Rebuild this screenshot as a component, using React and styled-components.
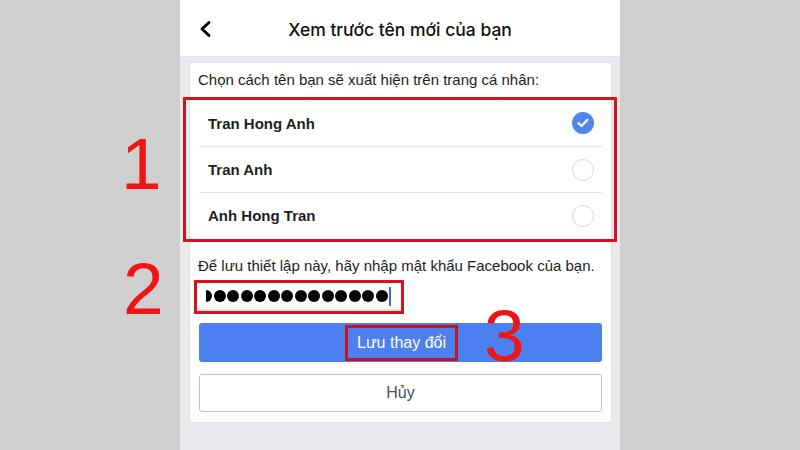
import React from "react";
import styled, { createGlobalStyle } from "styled-components";

const GlobalStyle = createGlobalStyle`
  html, body {
    margin: 0;
    padding: 0;
    background: #cfcfcf;
  }
  * {
    box-sizing: border-box;
  }
`;

const names = [
  { label: "Tran Hong Anh", checked: true },
  { label: "Tran Anh", checked: false },
  { label: "Anh Hong Tran", checked: false }
];

const Page = styled.div`
  position: relative;
  width: 800px;
  height: 450px;
  overflow: hidden;
  display: flex;
  justify-content: center;
  background: #cfcfcf;
  font-family: "Liberation Sans", Arial, sans-serif;
`;

const Phone = styled.div`
  width: 440px;
  height: 450px;
  background: #e9eaed;
  display: flex;
  flex-direction: column;
`;

const Header = styled.header`
  height: 57px;
  flex-shrink: 0;
  background: #fff;
  display: grid;
  grid-template-columns: 48px 1fr 48px;
  align-items: center;
  border-bottom: 1px solid #e4e5e8;
`;

const BackButton = styled.div`
  display: flex;
  align-items: center;
  justify-content: center;
  padding-left: 2px;
  padding-top: 2px;
`;

const Title = styled.h1`
  margin: 0;
  text-align: center;
  font-family: Inter, "Liberation Sans", sans-serif;
  font-size: 17.5px;
  font-weight: 500;
  color: #111;
  padding-top: 3px;
`;

const Card = styled.section`
  margin: 5px 8px 0 9px;
  background: #fff;
  border: 1px solid #dfe0e4;
  border-radius: 0 0 3px 3px;
  padding: 7px 0 10px;
  display: flex;
  flex-direction: column;
`;

const Prompt = styled.p`
  margin: 0;
  padding: 0 8px;
  font-size: 15px;
  line-height: 20px;
  color: #1d1e21;
`;

const Annotated = styled.div`
  position: relative;
  margin-top: ${p => p.$mt || 0}px;
`;

const RedBox = styled.span`
  position: absolute;
  top: ${p => p.$t}px;
  right: ${p => p.$r}px;
  bottom: ${p => p.$b}px;
  left: ${p => p.$l}px;
  border: 3px solid #d3141c;
  pointer-events: none;
`;

const OptionList = styled.ul`
  list-style: none;
  margin: 0 9px;
  padding: 0;
`;

const Option = styled.li`
  height: 46px;
  display: flex;
  align-items: center;
  justify-content: space-between;
  padding: 0 8px 0 9px;
  border-top: ${p => (p.$first ? "none" : "1px solid #e3e4e7")};
  font-size: 15px;
  font-weight: 700;
  color: #1d1e21;
`;

const Radio = styled.span`
  width: 22px;
  height: 22px;
  border-radius: 50%;
  display: flex;
  align-items: center;
  justify-content: center;
  background: ${p => (p.$checked ? "#4f86e8" : "#fff")};
  border: ${p => (p.$checked ? "none" : "1px solid #d8dade")};
`;

const Hint = styled.p`
  margin: 18px 0 0;
  padding: 0 8px;
  font-size: 15px;
  line-height: 20px;
  color: #1d1e21;
  white-space: nowrap;
`;

const PasswordWrap = styled(Annotated)`
  margin-left: 8px;
  width: 203px;
`;

const PasswordField = styled.div`
  height: 28px;
  background: #fff;
  border-bottom: 2px solid #dbe4f3;
  display: flex;
  align-items: center;
  padding-left: 8px;
`;

const DotTrack = styled.div`
  display: flex;
  align-items: center;
  overflow: hidden;
`;

const Dot = styled.span`
  flex-shrink: 0;
  width: 12px;
  height: 12px;
  border-radius: 50%;
  background: #000;
  margin-right: 1.5px;
  &:first-child {
    margin-left: -6px;
  }
`;

const Caret = styled.span`
  flex-shrink: 0;
  width: 2px;
  height: 19px;
  background: #3b6fd8;
`;

const PrimaryButton = styled.div`
  margin: 12px 9px 0;
  height: 39px;
  background: #4c80f1;
  border-radius: 3px;
  display: flex;
  align-items: center;
  justify-content: center;
`;

const PrimaryLabel = styled.span`
  display: inline-block;
  border: 3px solid #c8141c;
  padding: 0 9px;
  line-height: 30px;
  font-size: 16px;
  color: #fff;
  margin-left: 2px;
`;

const CancelButton = styled.div`
  margin: 12px 9px 0;
  height: 38px;
  background: #fff;
  border: 1px solid #bfc3c9;
  border-radius: 3px;
  display: flex;
  align-items: center;
  justify-content: center;
  font-size: 16px;
  color: #4b4f56;
`;

const Marker = styled.span`
  position: absolute;
  top: ${p => p.$top}px;
  left: ${p => p.$left}px;
  font-family: "Liberation Sans", Arial, sans-serif;
  font-size: 73px;
  line-height: 73px;
  color: #ef1515;
  pointer-events: none;
`;

const Chevron = () => (
  <svg width="14" height="18" viewBox="0 0 14 18">
    <polyline
      points="11,2.5 4,9 11,15.5"
      fill="none"
      stroke="#000"
      strokeWidth="3"
      strokeLinecap="round"
      strokeLinejoin="round"
    />
  </svg>
);

const Tick = () => (
  <svg width="12" height="10" viewBox="0 0 12 10">
    <polyline
      points="1.5,5.2 4.6,8 10.5,1.8"
      fill="none"
      stroke="#fff"
      strokeWidth="2.2"
      strokeLinecap="round"
      strokeLinejoin="round"
    />
  </svg>
);

const App = () => {
  const dots = Array.from({ length: 14 }, (_, i) => i);

  return (
    <>
      <GlobalStyle />
      <Page>
        <Phone>
          <Header>
            <BackButton>
              <Chevron />
            </BackButton>
            <Title>Xem trước tên mới của bạn</Title>
            <span />
          </Header>

          <Card>
            <Prompt>Chọn cách tên bạn sẽ xuất hiện trên trang cá nhân:</Prompt>

            <Annotated $mt={10}>
              <OptionList>
                {names.map((name, i) => (
                  <Option key={name.label} $first={i === 0}>
                    {name.label}
                    <Radio $checked={name.checked}>
                      {name.checked && <Tick />}
                    </Radio>
                  </Option>
                ))}
              </OptionList>
              <RedBox $t={-3} $r={-6} $b={-4} $l={-7} />
            </Annotated>

            <Hint>Để lưu thiết lập này, hãy nhập mật khẩu Facebook của bạn.</Hint>

            <PasswordWrap $mt={7}>
              <PasswordField>
                <DotTrack>
                  {dots.map(d => (
                    <Dot key={d} />
                  ))}
                </DotTrack>
                <Caret />
              </PasswordField>
              <RedBox $t={-3} $r={-3} $b={-3} $l={-4} />
            </PasswordWrap>

            <PrimaryButton>
              <PrimaryLabel>Lưu thay đổi</PrimaryLabel>
            </PrimaryButton>
            <CancelButton>Hủy</CancelButton>
          </Card>
        </Phone>

        <Marker $top={127} $left={121}>1</Marker>
        <Marker $top={252} $left={123}>2</Marker>
        <Marker $top={299} $left={484}>3</Marker>
      </Page>
    </>
  );
};

export default App;
